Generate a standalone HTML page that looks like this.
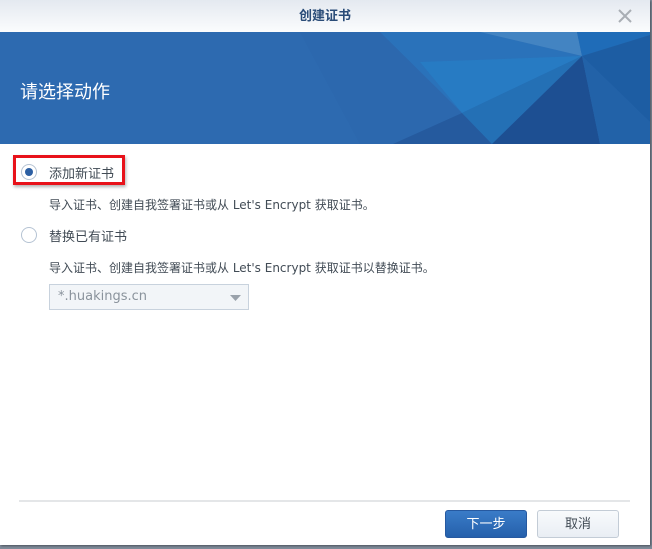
<!DOCTYPE html>
<html><head><meta charset="utf-8"><style>
*{margin:0;padding:0;box-sizing:border-box}
body{width:652px;height:549px;background:#7f8a99;position:relative;overflow:hidden;font-family:"Liberation Sans","Noto Sans CJK SC",sans-serif}
.dlg{position:absolute;left:0;top:0;width:650px;height:545px;background:#fff;box-shadow:1px 1px 2px rgba(0,0,0,.4)}
.hd{position:absolute;left:0;top:0;width:650px;height:32px;background:linear-gradient(#e4e9f0,#fbfcfd);text-align:center;line-height:32px;font-size:13px;font-weight:bold;color:#2a4c78}
.bn{position:absolute;left:0;top:32px;width:650px;height:112px;background:#2d6ab0;overflow:hidden}
.bn .t{position:absolute;left:20px;top:46px;color:#fff;font-size:18px}
.rad{position:absolute;width:16px;height:16px;border-radius:50%;border:1px solid #b5c3d3;background:#fff}
.rad.on::after{content:"";position:absolute;left:3px;top:3px;width:8px;height:8px;border-radius:50%;background:#2c5fa3}
.lb{position:absolute;font-size:13px;color:#414b55}
.ds{position:absolute;font-size:12px;color:#414b55;font-family:"DejaVu Sans","Noto Sans CJK SC",sans-serif;white-space:nowrap}
.btn{position:absolute;top:510px;height:28px;width:82px;border-radius:3px;text-align:center;line-height:26px;font-size:13px}
</style></head><body>
<div class="dlg">
<div class="hd">创建证书
<svg style="position:absolute;left:618px;top:9px" width="14" height="14"><path d="M1 1L13 13M13 1L1 13" stroke="#a9aeb4" stroke-width="2"/></svg></div>
<div class="bn">
<svg width="650" height="112" style="position:absolute;left:0;top:0">
<polygon points="300,0 650,0 650,112 360,112" fill="#2b66ab" opacity=".5"/>
<polygon points="380,0 480,0 582,24 462,81" fill="#2a74bd" opacity=".8"/>
<polygon points="420,30 582,24 462,81" fill="#2483cb" opacity=".5"/>
<polygon points="480,0 577,0 582,24" fill="#4384c2"/>
<polygon points="577,0 650,0 650,3 582,24" fill="#1f6cb8"/>
<polygon points="462,81 393,112 492,112" fill="#255a9e"/>
<polygon points="462,81 582,24 492,112" fill="#2470b5"/>
<polygon points="582,24 492,112 600,112" fill="#1d4f92"/>
<polygon points="582,24 650,3 650,90" fill="#1d5da3"/>
<polygon points="582,24 650,90 650,112 600,112" fill="#2262a8"/>
</svg>
<div class="t">请选择动作</div></div>
<div style="position:absolute;left:13px;top:155px;width:112px;height:30px;border:3px solid #e8121a;box-shadow:1px 2px 3px rgba(0,0,0,.3)"></div>
<div class="rad on" style="left:21px;top:164px"></div>
<div class="lb" style="left:49px;top:163px">添加新证书</div>
<div class="ds" style="left:49px;top:196px">导入证书、创建自我签署证书或从 Let's Encrypt 获取证书。</div>
<div class="rad" style="left:21px;top:227px"></div>
<div class="lb" style="left:49px;top:226px">替换已有证书</div>
<div class="ds" style="left:49px;top:259px">导入证书、创建自我签署证书或从 Let's Encrypt 获取证书以替换证书。</div>
<div style="position:absolute;left:49px;top:284px;width:200px;height:26px;border:1px solid #c8d2dd;background:#f2f5f8;font-size:13px;color:#8a939c;line-height:24px;padding-left:8px;font-family:'DejaVu Sans',sans-serif">*.huakings.cn
<svg style="position:absolute;left:180px;top:10px" width="11" height="6"><path d="M0 0H11L5.5 6Z" fill="#9aa2ab"/></svg></div>
<div style="position:absolute;left:19px;top:500px;width:611px;height:2px;background:#e4e6e8"></div>
<div class="btn" style="left:445px;background:linear-gradient(#3a7cc8,#2560ab);border:1px solid #2659a0;color:#fff">下一步</div>
<div class="btn" style="left:537px;background:linear-gradient(#f8fafc,#e9eef4);border:1px solid #c3ccd6;color:#414b55">取消</div>
</div>
</body></html>
